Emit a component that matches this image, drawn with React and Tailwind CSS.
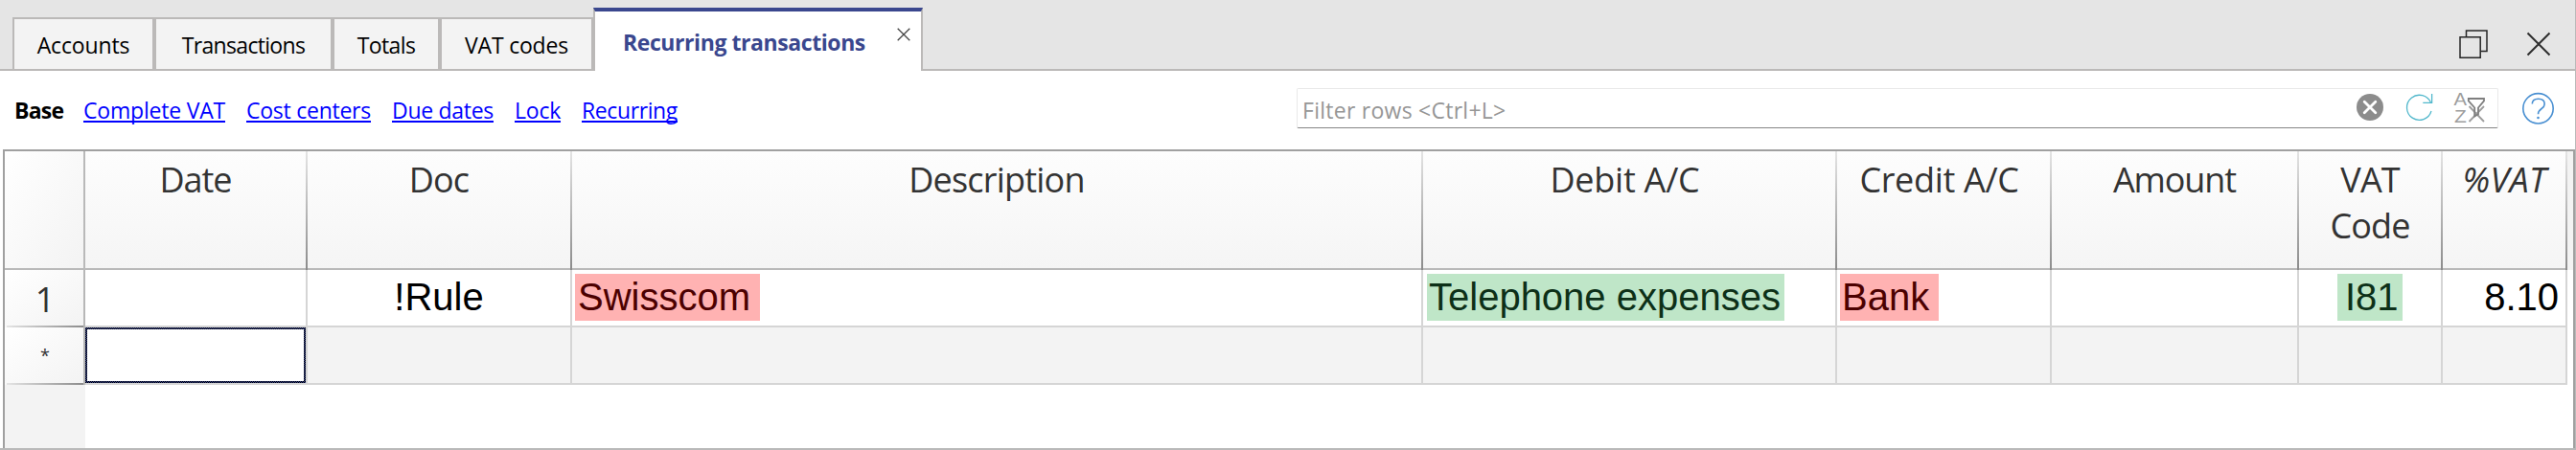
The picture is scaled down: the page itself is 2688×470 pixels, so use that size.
const TABS = [
  { label: 'Accounts', box: 'w-[148px]', text: 'tracking-[-0.15px]' },
  { label: 'Transactions', box: 'w-[186px]', text: 'tracking-[-0.68px]' },
  { label: 'Totals', box: 'w-[112px]', text: 'tracking-[-0.6px]' },
  { label: 'VAT codes', box: 'w-[160px]', text: 'tracking-[-0.2px]' },
];

const VIEWS = [
  { label: 'Complete VAT', cls: 'w-[148px] tracking-[-0.2px]' },
  { label: 'Cost centers', cls: 'w-[130px] tracking-[-0.25px]' },
  { label: 'Due dates', cls: 'w-[106px] tracking-[-0.3px]' },
  { label: 'Lock', cls: 'w-[48px] tracking-[-0.2px]' },
  { label: 'Recurring', cls: 'w-[100px] tracking-[-0.4px]' },
];

const PINK = 'bg-[#ffb2b2] text-[#4c0000]';
const GREEN = 'bg-[#bfe6c8] text-[#0d3018]';

const COLUMNS = [
  { lines: ['Date'], width: 'w-[232px]', head: 'tracking-[-1px]' },
  { lines: ['Doc'], width: 'w-[276px]', head: 'tracking-[-0.8px]', value: '!Rule', cell: 'justify-center', mark: 'text-black' },
  { lines: ['Description'], width: 'w-[888px]', head: 'tracking-[-0.8px]', value: 'Swisscom', cell: 'pl-[3px]', mark: `${PINK} w-[193px] pl-[3px]` },
  { lines: ['Debit A/C'], width: 'w-[432px]', head: 'pr-[9px] tracking-[-0.25px]', value: 'Telephone expenses', cell: 'pl-[4px]', mark: `${GREEN} w-[373px] pl-[2px]` },
  { lines: ['Credit A/C'], width: 'w-[224px]', head: 'pr-[9px] tracking-[-0.33px]', value: 'Bank', cell: 'pl-[3px]', mark: `${PINK} w-[103px] pl-[2px]` },
  { lines: ['Amount'], width: 'w-[258px]', head: 'tracking-[-1.1px]' },
  { lines: ['VAT', 'Code'], width: 'w-[150px]', head: 'tracking-[-0.9px]', value: 'I81', cell: 'justify-center', mark: `${GREEN} w-[68px] pl-[8px]` },
  { lines: ['%VAT'], width: 'w-[130px]', head: 'italic tracking-[0.3px] pl-[1px]', value: '8.10', cell: 'justify-end pr-[7px]', mark: 'text-black' },
];

function TabStrip() {
  return (
    <div className="flex h-[74px] shrink-0 items-end bg-[#e5e5e5]">
      <div className="h-full w-[13px] border-b-2 border-[#bbb9b8]" />
      {TABS.map((t) => (
        <div key={t.label} className={`flex h-[56px] justify-center border-2 border-[#bbb9b8] bg-[#f3f3f3] pt-[11px] leading-[32px] ${t.box}`}>
          <span className={t.text}>{t.label}</span>
        </div>
      ))}
      <div className="flex h-[66px] w-[344px] justify-between border-x-2 border-t-4 border-x-[#bbb9b8] border-t-[#3a478e] bg-white pr-[11px] pl-[29px]">
        <span className="pt-[16px] font-bold leading-[32px] tracking-[-0.42px] text-[#3a478e]">Recurring transactions</span>
        <svg className="mt-[17px] size-[14px]" viewBox="0 0 14 14" fill="none" stroke="#444" strokeWidth="1.3">
          <path d="M0.7 0.7 13.3 13.3M13.3 0.7 0.7 13.3" />
        </svg>
      </div>
      <div className="flex h-full flex-1 justify-end gap-[39px] border-b-2 border-[#bbb9b8] pr-[25px]">
        <svg className="mt-[31px] h-[30px] w-[31px]" viewBox="0 0 31 30" fill="none" stroke="#262626" strokeWidth="1.5">
          <path d="M7.5 7.5V1H29V22.5H22.2" />
          <path d="M1 7.8H22.2V29.2H1Z" />
        </svg>
        <svg className="mt-[33px] size-[26px]" viewBox="0 0 26 26" fill="none" stroke="#2e2e2e" strokeWidth="2">
          <path d="M1.5 1.5 24.5 24.5M24.5 1.5 1.5 24.5" />
        </svg>
      </div>
    </div>
  );
}

function Toolbar() {
  return (
    <div className="flex h-[82px] shrink-0 pl-[15px]">
      <div className="flex gap-[22px] pt-[25px] leading-[32px]">
        <span className="w-[50px] font-bold tracking-[-0.8px]">Base</span>
        {VIEWS.map((v) => (
          <a key={v.label} className={`h-[29px] border-b-2 border-[#0000ff] whitespace-nowrap text-[#0000ff] ${v.cls}`}>{v.label}</a>
        ))}
      </div>
      <div className="mt-[18px] ml-auto flex h-[42px] w-[1254px] rounded-[2px] border border-[#e9e9e9] border-b-[#868686] pr-[12px] pl-[5px]">
        <span className="flex-1 pt-[6px] leading-[32px] tracking-[0.26px] text-[#969696]">{'Filter rows <Ctrl+L>'}</span>
        <svg className="mt-[5px] size-[28px]" viewBox="0 0 28 28">
          <circle cx="14" cy="14" r="14" fill="#8c8c8c" />
          <path d="M8.2 8.2 19.8 19.8M19.8 8.2 8.2 19.8" stroke="#fff" strokeWidth="2.8" strokeLinecap="round" />
        </svg>
        <svg className="mt-[4px] ml-[23px] h-[31px] w-[30px]" viewBox="0 0 30 31" fill="none" stroke="#52b8cc" strokeWidth="1.3">
          <path d="M27 19A13 13 0 1 1 26.6 10.5" />
          <path d="M27.6 1V10.3H18.3" />
        </svg>
        <svg className="ml-[20px] h-[40px] w-[34px] overflow-visible" viewBox="0 -4 34 40" fill="none">
          <text x="0.5" y="13.4" fontFamily="Liberation Sans" fontSize="18" fill="#9d9d9d" textLength="13.5" lengthAdjust="spacingAndGlyphs">A</text>
          <text x="1" y="30.6" fontFamily="Liberation Sans" fontSize="18" fill="#9d9d9d" textLength="12.8" lengthAdjust="spacingAndGlyphs">Z</text>
          <path d="M16.5 14 32 30M32 14 16.5 30" stroke="#9d9d9d" strokeWidth="1.8" />
          <path d="M15.8 6H32V8.4L26 15.5V22.3L22.2 24.5V15.5L15.8 8.4Z" stroke="#7f7f7f" strokeWidth="1.8" />
        </svg>
      </div>
      <svg className="mt-[22px] mr-[21px] ml-[25px] size-[34px]" viewBox="0 0 34 34" fill="none" stroke="#4a90d2" strokeWidth="1.6">
        <circle cx="16.5" cy="17.3" r="15.7" />
        <path d="M10.3 12.6C10.3 9 13 7.3 16.7 7.3C20.6 7.3 23.2 9.4 23.2 12.7C23.2 18 16.5 17 16.5 23.2" />
        <circle cx="16.5" cy="27" r="1.3" fill="#4a90d2" stroke="none" />
      </svg>
    </div>
  );
}

function HeaderRow() {
  return (
    <div className="flex h-[124px]">
      <div className="w-[84px] border-r-2 border-b-2 border-[#b9b9b9] bg-linear-to-br from-white to-[#f3f3f3]" />
      {COLUMNS.map((c) => (
        <div key={c.lines[0]} className={`flex ${c.width}`}>
          <div className={`flex flex-1 flex-col items-center border-b-2 border-[#b9b9b9] bg-linear-to-b from-[#fdfdfd] to-[#f5f5f5] pt-[6px] text-[36px] leading-[48px] text-[#333] ${c.head}`}>
            {c.lines.map((l) => (
              <span key={l}>{l}</span>
            ))}
          </div>
          <div className="w-[2px] bg-linear-to-b from-[#e4e4e4] to-[#8c8c8c]" />
        </div>
      ))}
      <div className="flex-1 bg-[#f3f3f3]" />
    </div>
  );
}

function RowHead({ children }) {
  return (
    <div className="flex w-[84px] flex-col border-r-2 border-[#b7b7b7] bg-linear-to-br from-white to-[#f3f3f3]">
      <div className="flex h-[58px] justify-center pl-[2px]">{children}</div>
      <div className="ml-[2px] h-[2px] bg-linear-to-r from-[#e4e4e4] to-[#8c8c8c]" />
    </div>
  );
}

export default function App() {
  return (
    <div className="flex h-[470px] w-[2688px] overflow-hidden bg-white font-['Open_Sans',sans-serif] text-[23px] text-black">
      <div className="flex w-[2687px] flex-col">
        <TabStrip />
        <Toolbar />
        <div className="ml-[3px] flex h-[312px] flex-col border-x-2 border-t-2 border-[#a0a0a0]">
          <HeaderRow />
          <div className="flex h-[60px]">
            <RowHead>
              <span className="pt-[7px] text-[36px] leading-[48px] text-[#333]">1</span>
            </RowHead>
            {COLUMNS.map((c) => (
              <div key={c.lines[0]} className={`flex border-r-2 border-b-2 border-[#d5d5d5] pt-[4px] font-['Liberation_Sans',sans-serif] text-[40px] ${c.width} ${c.cell ?? ''}`}>
                {c.value && <span className={`h-[49px] leading-[49px] whitespace-nowrap ${c.mark}`}>{c.value}</span>}
              </div>
            ))}
          </div>
          <div className="flex h-[60px]">
            <RowHead>
              <span className="pt-[17px] text-[18px] leading-[24px] text-[#333]">*</span>
            </RowHead>
            {COLUMNS.map((c, i) => (
              <div key={c.lines[0]} className={`border-r-2 border-b-2 border-[#d5d5d5] bg-[#f3f3f3] ${c.width}`}>
                {i === 0 && (
                  <div className="h-full bg-[repeating-conic-gradient(#000_0_25%,#34428a_0_50%)] bg-size-[2px_2px] p-[2px]">
                    <div className="h-full bg-white" />
                  </div>
                )}
              </div>
            ))}
          </div>
          <div className="w-[84px] flex-1 bg-[#f3f3f3]" />
        </div>
        <div className="h-[2px] bg-[#b9b9b9]" />
      </div>
      <div className="w-px bg-[#b9b9b9]" />
    </div>
  );
}
